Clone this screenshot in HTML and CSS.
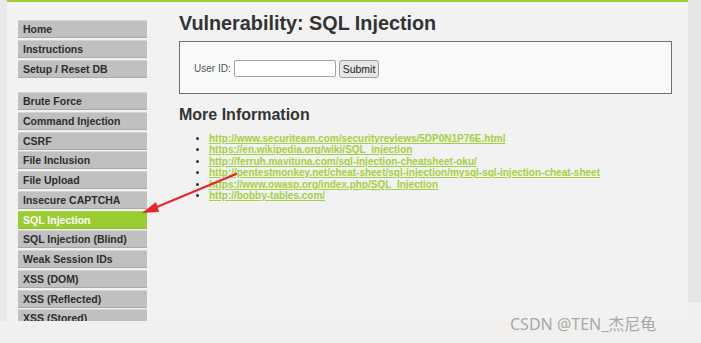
FILE: index.html
```html
<!DOCTYPE html>
<html lang="en">
<head>
    <meta charset="UTF-8">
    <title>Vulnerability: SQL Injection</title>
    <link rel="stylesheet" href="styles.css">
</head>
<body>
    <div class="page">
        <div class="edge-left"></div>
        <div class="main">
            <div class="menu">
                <div class="menu-block">
                    <div class="menu-item">Home</div>
                    <div class="menu-item">Instructions</div>
                    <div class="menu-item">Setup / Reset DB</div>
                </div>
                <div class="menu-block">
                    <div class="menu-item">Brute Force</div>
                    <div class="menu-item">Command Injection</div>
                    <div class="menu-item">CSRF</div>
                    <div class="menu-item">File Inclusion</div>
                    <div class="menu-item">File Upload</div>
                    <div class="menu-item">Insecure CAPTCHA</div>
                    <div class="menu-item active">SQL Injection</div>
                    <div class="menu-item">SQL Injection (Blind)</div>
                    <div class="menu-item">Weak Session IDs</div>
                    <div class="menu-item">XSS (DOM)</div>
                    <div class="menu-item">XSS (Reflected)</div>
                    <div class="menu-item">XSS (Stored)</div>
                </div>
            </div>
            <div class="content">
                <h1>Vulnerability: SQL Injection</h1>
                <div class="vuln-box">
                    <form class="user-form">
                        <label>User ID:</label>
                        <input type="text" class="user-input">
                        <button type="button" class="submit-btn">Submit</button>
                    </form>
                </div>
                <h2>More Information</h2>
                <ul class="links">
                    <li><a href="#">http://www.securiteam.com/securityreviews/5DP0N1P76E.html</a></li>
                    <li><a href="#">https://en.wikipedia.org/wiki/SQL_injection</a></li>
                    <li><a href="#">http://ferruh.mavituna.com/sql-injection-cheatsheet-oku/</a></li>
                    <li><a href="#">http://pentestmonkey.net/cheat-sheet/sql-injection/mysql-sql-injection-cheat-sheet</a></li>
                    <li><a href="#">https://www.owasp.org/index.php/SQL_Injection</a></li>
                    <li><a href="#">http://bobby-tables.com/</a></li>
                </ul>
            </div>
        </div>
        <div class="edge-right"></div>

        <svg class="arrow" width="701" height="343" viewBox="0 0 701 343">
            <line x1="236" y1="174" x2="152" y2="209" stroke="#e8262b" stroke-width="2.2" stroke-linecap="round"/>
            <polygon points="142,213 156,202 159,212" fill="#e8262b"/>
        </svg>
    </div>
    <div class="watermark">CSDN @TEN_杰尼龟</div>
</body>
</html>
```

FILE: styles.css
```css
body {
    margin: 0;
    background-color: #f1f0ee;
    font-family: "Liberation Sans", Arial, sans-serif;
    width: 701px;
    height: 343px;
    overflow: hidden;
    position: relative;
}
.page {
    display: flex;
    height: 321px;
    position: relative;
}
.edge-left {
    width: 7px;
    background-color: #e8e8e8;
}
.edge-right {
    width: 13px;
    height: 302px;
    background-color: #e6e6e6;
}
.main {
    width: 681px;
    background-color: #f2f2f2;
    border-top: 2px solid #9fcd3a;
    display: flex;
    overflow: hidden;
}
.menu {
    width: 129px;
    padding: 18px 0 0 11px;
}
.menu-block {
    display: flex;
    flex-direction: column;
    gap: 1.75px;
    margin-bottom: 14.5px;
}
.menu-item {
    height: 16px;
    line-height: 17px;
    background-color: #c0c0c0;
    border-top: 1px solid #d4d4d4;
    border-bottom: 1px solid #a9a9a9;
    padding-left: 5px;
    font-size: 10.5px;
    font-weight: bold;
    color: #2d2d2d;
    white-space: nowrap;
}
.menu-item.active {
    background-color: #9acd32;
    border-top-color: #a8d84a;
    border-bottom-color: #8cbf28;
    color: #ffffff;
}
.content {
    padding: 0 0 0 32px;
    flex: 1;
}
h1 {
    margin: 10px 0 0 0;
    font-size: 19.8px;
    line-height: 23px;
    color: #333333;
}
.vuln-box {
    width: 491px;
    height: 51px;
    margin-top: 6px;
    border: 1px solid #707070;
    background-color: #f8f9f9;
    display: flex;
    align-items: center;
}
.user-form {
    margin: 2px 0 0 14px;
    display: flex;
    align-items: center;
    font-size: 10px;
    color: #555555;
}
.user-input {
    width: 98px;
    height: 13px;
    margin: 0 3px 0 3px;
    padding: 1px;
    border: 1px solid #a0a0a8;
    border-radius: 2px;
    background: #ffffff;
}
.submit-btn {
    height: 18px;
    padding: 0 3px;
    font-family: "Liberation Sans", Arial, sans-serif;
    font-size: 10.5px;
    color: #222222;
    background-color: #e6e6e6;
    border: 1px solid #a0a0a0;
    border-radius: 3px;
}
h2 {
    margin: 11px 0 0 0;
    font-size: 16px;
    line-height: 20px;
    color: #333333;
}
.links {
    margin: 8px 0 0 0;
    padding-left: 30px;
    font-size: 10px;
    line-height: 11.4px;
    color: #333333;
}
.links li {
    white-space: nowrap;
}
.links a {
    color: #a4d13e;
    font-weight: bold;
    text-decoration: underline;
}
.arrow {
    position: absolute;
    left: 0;
    top: 0;
    pointer-events: none;
}
.watermark {
    position: absolute;
    left: 510px;
    top: 311px;
    font-family: "Noto Sans", "Noto Sans CJK SC", sans-serif;
    font-size: 16px;
    color: #a8a8a8;
    white-space: nowrap;
}
```
